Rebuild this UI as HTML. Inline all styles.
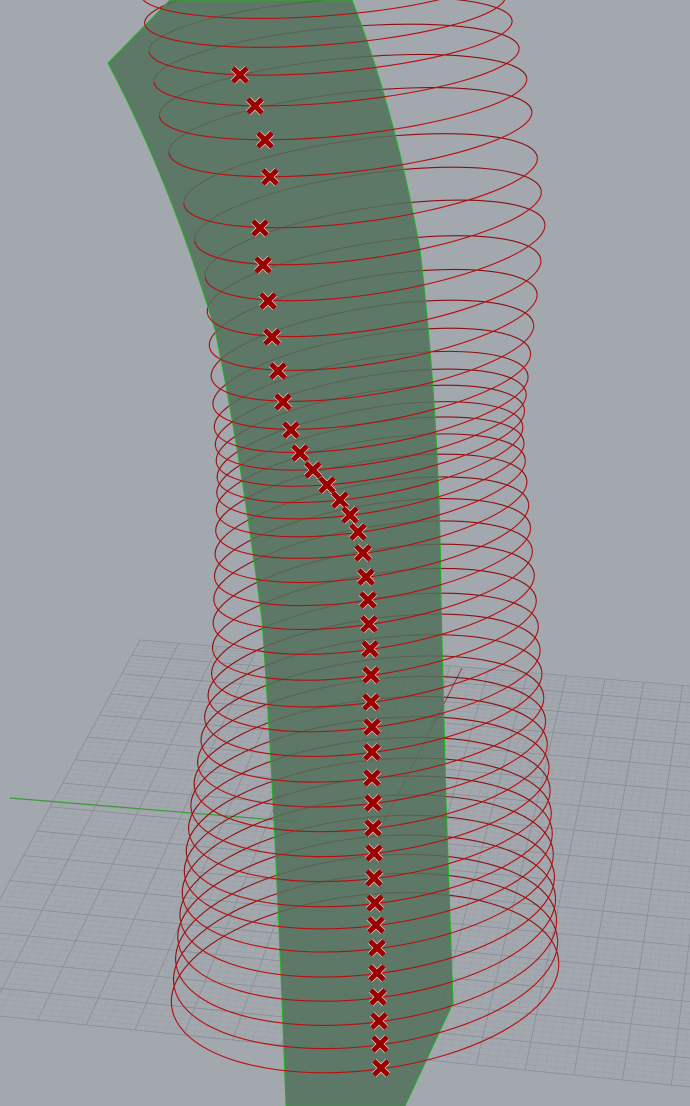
<!DOCTYPE html><html><head><style>html,body{margin:0;padding:0;background:#a3a7ae;width:690px;height:1106px;overflow:hidden}</style></head><body>
<svg id="s" width="690" height="1106" viewBox="0 0 690 1106" xmlns="http://www.w3.org/2000/svg"><rect width="690" height="1106" fill="#a3a7ae"/><g id="grid"></g><line x1="10" y1="798" x2="300" y2="822" stroke="#3a9a3a" stroke-width="1.2"/><line x1="462" y1="668" x2="380" y2="830" stroke="#8a4444" stroke-width="1"/><g id="back"></g><path d="M108,63 L170,0 L352,0 Q395,110 420,250 Q440,420 441,600 L446,800 L453,1003 L405,1106 L286,1106 Q275,800 262,620 Q240,450 215,330 Q170,180 108,63 Z" fill="#52705b" fill-opacity="0.85" stroke="#22b022" stroke-width="1"/><g id="front"></g><g id="mk"></g></svg>
<script>
var NS="http://www.w3.org/2000/svg";function el(p,t,a){var e=document.createElementNS(NS,t);for(var k in a)e.setAttribute(k,a[k]);document.getElementById(p).appendChild(e);return e;}
var A=[140,640],B=[760,692],C=[720,1090],D=[-60,1010];
function L(a,b,t){return[a[0]+(b[0]-a[0])*t,a[1]+(b[1]-a[1])*t]}
var N=80;for(var i=0;i<=N;i++){var t=i/N,c=i%5==0?"#888c94":"#999da4",w=i%5==0?0.8:0.5;
var p=L(A,B,t),q=L(D,C,t);el("grid","line",{x1:p[0],y1:p[1],x2:q[0],y2:q[1],stroke:c,"stroke-width":w});
var t2=Math.pow(t,1.15);p=L(A,D,t2);q=L(B,C,t2);el("grid","line",{x1:p[0],y1:p[1],x2:q[0],y2:q[1],stroke:c,"stroke-width":w});}
var M=[[240,75],[255,106],[265,140],[270,177],[260,228],[263,265],[268,301],[272,337],[278,371],[283,402],[291,430],[300,453],[313,470],[327,485],[340,500],[350,515],[358,532],[363,553],[366,577],[368,600],[369,624],[370,649],[371,675],[371,702],[372,727],[372,752],[372,778],[373,803],[373,828],[374,853],[374,878],[375,903],[376,925],[377,948],[377,973],[378,997],[379,1021],[380,1044],[381,1068]];
function interp(k,y){if(y<=k[0][0])return k[0].slice(1);for(var i=0;i<k.length-1;i++)if(y<=k[i+1][0]){var t=(y-k[i][0])/(k[i+1][0]-k[i][0]);return k[i].slice(1).map(function(v,j){return v+(k[i+1][j+1]-v)*t})}return k[k.length-1].slice(1);}
var P=[[20,320,180,0.19,-4],[150,345,185,0.21,-6],[300,375,172,0.25,-9],[500,370,155,0.28,-10],[700,375,165,0.31,-9],[850,370,180,0.37,-7],[1070,365,195,0.45,-7]];
var R=[[232,18],[236,47]].concat(M);
R.forEach(function(m){var mx=m[0],my=m[1],p=interp(P,my),cx=p[0],rx=p[1],ry=rx*p[2],th=p[3]*Math.PI/180;
var u=(mx-cx)/rx;if(u<-0.95)u=-0.95;var cy=my-ry*Math.sqrt(1-u*u)-(mx-cx)*Math.tan(th);
var x1=cx-rx*Math.cos(th),y1=cy-rx*Math.sin(th),x2=cx+rx*Math.cos(th),y2=cy+rx*Math.sin(th),deg=p[3];
el("back","path",{d:"M"+x1+","+y1+" A"+rx+","+ry+" "+deg+" 0 1 "+x2+","+y2,fill:"none",stroke:"#8a1010","stroke-width":1.1});
el("front","path",{d:"M"+x1+","+y1+" A"+rx+","+ry+" "+deg+" 0 0 "+x2+","+y2,fill:"none",stroke:"#b80e0e","stroke-width":1.1});});
M.forEach(function(m){var x=m[0],y=m[1];
el("mk","path",{d:"M"+(x-7)+","+(y-7)+" L"+(x+7)+","+(y+7)+" M"+(x+7)+","+(y-7)+" L"+(x-7)+","+(y+7),stroke:"#e8c0c0","stroke-width":6.5});
el("mk","path",{d:"M"+(x-7)+","+(y-7)+" L"+(x+7)+","+(y+7)+" M"+(x+7)+","+(y-7)+" L"+(x-7)+","+(y+7),stroke:"#9a0000","stroke-width":5});});
</script></body></html>
